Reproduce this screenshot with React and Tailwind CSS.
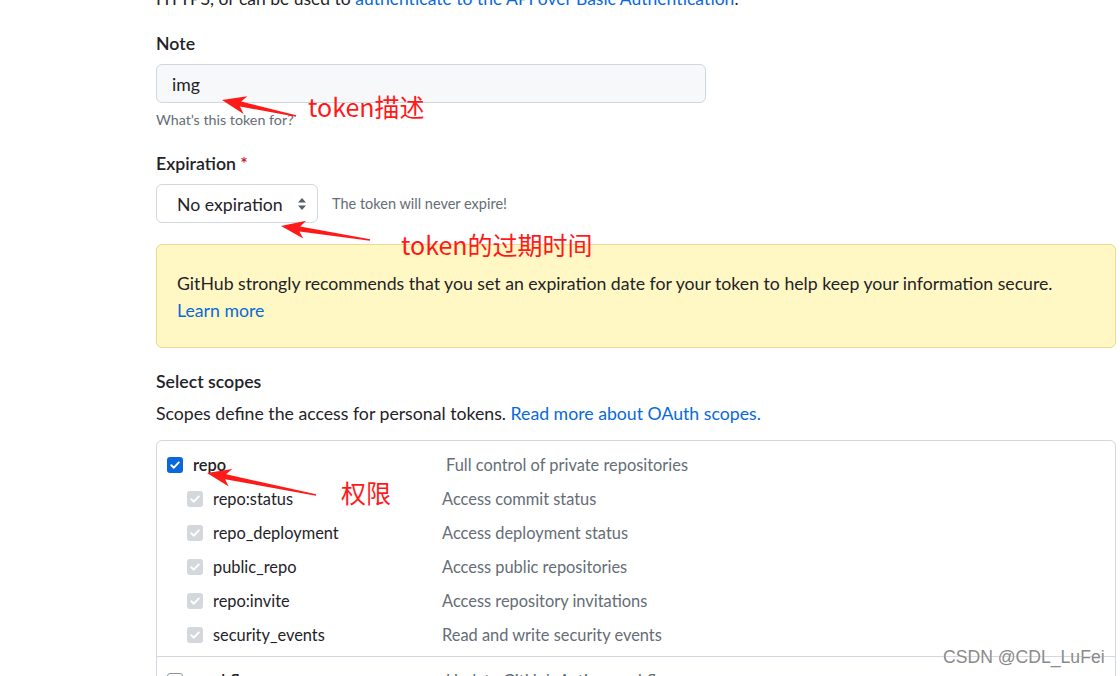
import React from 'react';

const FONT = { fontFamily: '"Segoe UI", Lato, "Noto Sans", sans-serif' };
const CJK = { fontFamily: '"Microsoft YaHei", "Noto Sans CJK SC", sans-serif' };

const subScopes = [
    { name: 'repo:status', desc: 'Access commit status' },
    { name: 'repo_deployment', desc: 'Access deployment status' },
    { name: 'public_repo', desc: 'Access public repositories' },
    { name: 'repo:invite', desc: 'Access repository invitations' },
    { name: 'security_events', desc: 'Read and write security events' },
];

// arrows drawn by hand over the screenshot: tip -> tail
const arrows = [
    { tip: [222, 100], tail: [296, 116] },
    { tip: [281, 226], tail: [370, 240] },
    { tip: [207, 473], tail: [316, 495] },
];

const arrowPath = ({ tip, tail }) => {
    const dx = tail[0] - tip[0];
    const dy = tail[1] - tip[1];
    const len = Math.hypot(dx, dy);
    const ux = dx / len, uy = dy / len;
    const nx = -uy, ny = ux;
    const head = 24;
    const bx = tip[0] + ux * head, by = tip[1] + uy * head;
    const nb = tip[0] + ux * (head - 5), nby = tip[1] + uy * (head - 5);
    const p = (x, y) => `${x.toFixed(1)},${y.toFixed(1)}`;
    return [
        'M', p(tip[0], tip[1]),
        'L', p(bx + nx * 9, by + ny * 9),
        'L', p(nb + nx * 2.5, nby + ny * 2.5),
        'L', p(tail[0] + nx * 0.7, tail[1] + ny * 0.7),
        'L', p(tail[0] - nx * 0.7, tail[1] - ny * 0.7),
        'L', p(nb - nx * 2.5, nby - ny * 2.5),
        'L', p(bx - nx * 9, by - ny * 9),
        'Z',
    ].join(' ');
};

const Check = ({ checked, disabled }) => (
    <span
        className={
            'flex h-[16px] w-[16px] shrink-0 items-center justify-center rounded-[3px] ' +
            (disabled ? 'bg-[#d4d7dc]' : checked ? 'bg-[#0969da]' : 'border border-[#8c959f] bg-white')
        }
    >
        {checked && (
            <svg width="12" height="12" viewBox="0 0 12 12" fill="none">
                <path d="M2.3 6.2 L4.9 8.7 L9.8 3.4" stroke="white" strokeWidth="1.9" strokeLinecap="round" strokeLinejoin="round" />
            </svg>
        )}
    </span>
);

const App = () => {
    return (
        <div className="relative h-[676px] w-[1120px] overflow-hidden bg-white text-[#1f2328]" style={FONT}>
            <div className="pl-[156px] pr-[4px] text-[17.7px]">
                <p className="-mt-[14px] text-[17.5px] leading-[26px] whitespace-nowrap">
                    HTTPS, or can be used to <span className="text-[#0969da]">authenticate to the API over Basic Authentication</span>.
                </p>

                <div className="mt-[19px] font-semibold leading-[26px]">Note</div>
                <div className="mt-[7px] flex h-[39px] w-[550px] items-center rounded-[6px] border border-[#d0d7de] bg-[#f6f8fa] pl-[15px] pt-[3px]">
                    img
                </div>
                <div className="mt-[7px] text-[14.3px] leading-[20px] text-[#656d76]">What’s this token for?</div>

                <div className="mt-[21px] font-semibold leading-[26px]">
                    Expiration <span className="text-[#cf222e]">*</span>
                </div>
                <div className="mt-[7px] flex items-center">
                    <div className="flex h-[39px] w-[162px] items-center justify-between rounded-[6px] border border-[#d0d7de] bg-white pl-[20px] pr-[10px]">
                        <span className="pt-[3px]">No expiration</span>
                        <svg width="10" height="14" viewBox="0 0 10 14">
                            <path d="M5 1 L9 5.5 L1 5.5 Z M5 13 L9 8.5 L1 8.5 Z" fill="#57606a" />
                        </svg>
                    </div>
                    <span className="ml-[14px] text-[14.5px] text-[#656d76]">The token will never expire!</span>
                </div>

                <div className="mt-[21px] h-[104px] rounded-[6px] border border-[#eed98c] bg-[#fff8c5] pl-[20px] pt-[25px] leading-[27px]">
                    <div>GitHub strongly recommends that you set an expiration date for your token to help keep your information secure.</div>
                    <div className="text-[#0969da]">Learn more</div>
                </div>

                <div className="mt-[21px] font-semibold leading-[26px]">Select scopes</div>
                <div className="mt-[6px] leading-[26px]">
                    Scopes define the access for personal tokens. <span className="text-[#0969da]">Read more about OAuth scopes.</span>
                </div>

                <div className="mt-[13px] rounded-[6px] border border-[#d0d7de] text-[16.4px]">
                    <div className="pb-[4px] pt-[7px]">
                        <div className="flex h-[34px] items-center pl-[10px]">
                            <Check checked />
                            <span className="ml-[10px] w-[253px] font-semibold">repo</span>
                            <span className="text-[#656d76]">Full control of private repositories</span>
                        </div>
                        {subScopes.map((s) => (
                            <div key={s.name} className="flex h-[34px] items-center pl-[30px]">
                                <Check checked disabled />
                                <span className="ml-[10px] w-[229px]">{s.name}</span>
                                <span className="text-[#656d76]">{s.desc}</span>
                            </div>
                        ))}
                    </div>
                    <div className="border-t border-[#d0d7de] pt-[7px]">
                        <div className="flex h-[34px] items-center pl-[10px]">
                            <Check />
                            <span className="ml-[10px] w-[253px] font-semibold">workflow</span>
                            <span className="text-[#656d76]">Update GitHub Action workflows</span>
                        </div>
                    </div>
                </div>
            </div>

            {/* annotations */}
            <svg className="pointer-events-none absolute left-0 top-0" width="1120" height="676">
                {arrows.map((a, i) => (
                    <path key={i} d={arrowPath(a)} fill="#ff1a1a" />
                ))}
            </svg>
            <div className="absolute left-[308px] top-[89px] text-[25px] leading-[34px] text-[#ff1a1a]" style={CJK}>
                token描述
            </div>
            <div className="absolute left-[401px] top-[227px] text-[25px] leading-[34px] text-[#ff1a1a]" style={CJK}>
                token的过期时间
            </div>
            <div className="absolute left-[341px] top-[475px] text-[25px] leading-[34px] text-[#ff1a1a]" style={CJK}>
                权限
            </div>
            <div
                className="absolute left-[943px] top-[646px] text-[17.6px] leading-[22px] text-[#8a8a8a]"
                style={{ fontFamily: '"Liberation Sans", Arial, sans-serif', textShadow: '0 0 2px #fff' }}
            >
                CSDN @CDL_LuFei
            </div>
        </div>
    );
};

export default App;
